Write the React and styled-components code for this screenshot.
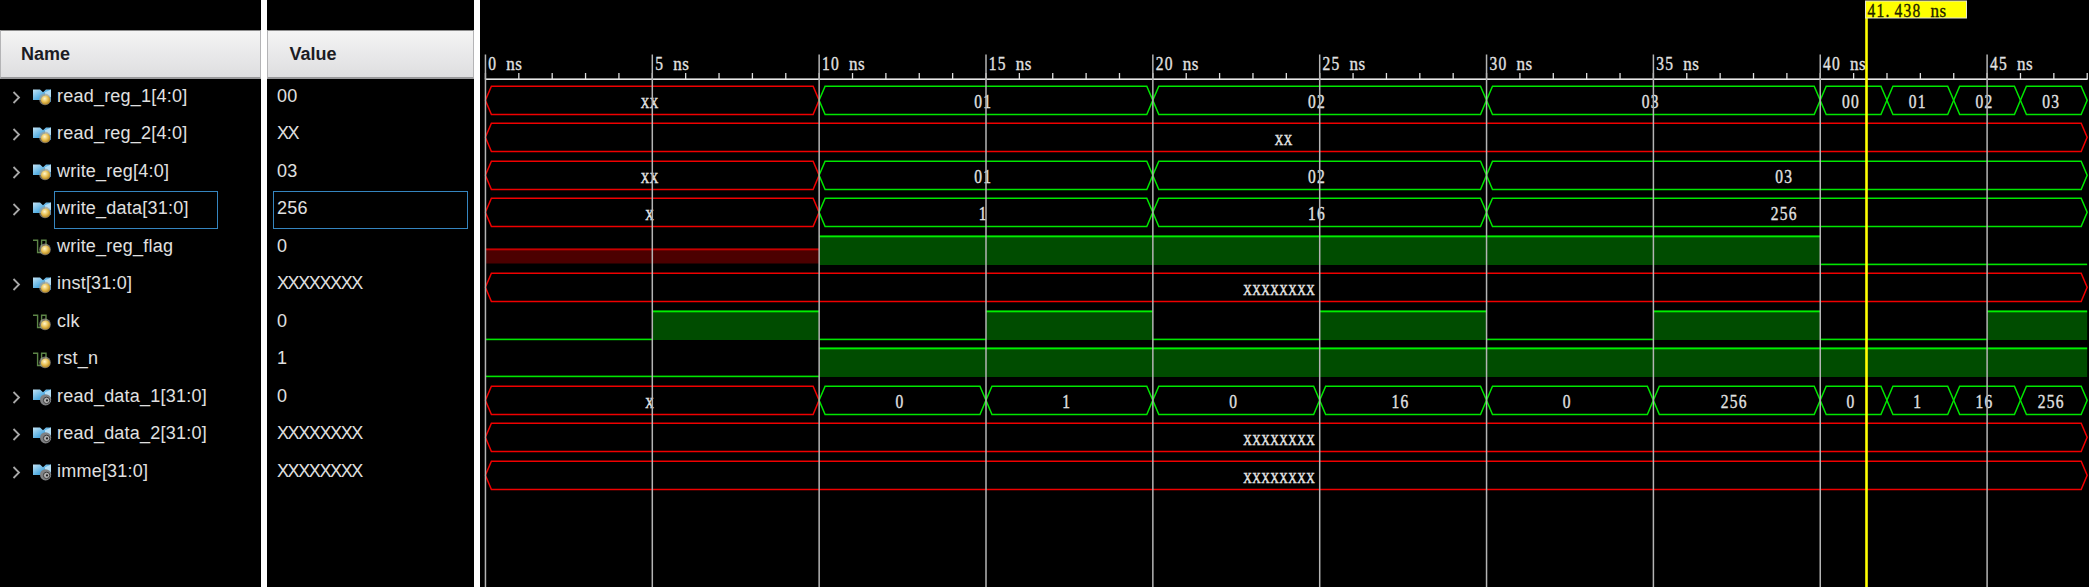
import React from 'react';
import styled, { createGlobalStyle } from 'styled-components';

const Global = createGlobalStyle`
  body { margin: 0; background: #000; overflow: hidden; }
`;
const ROW = 37.5;
const X0 = 5.4;
const NS = 33.37;
const px = (t) => X0 + t * NS;
const RED = '#f00000';
const GREEN = '#00e600';

const Viewer = styled.main`
  display: grid;
  grid-template-columns: 261px 6px 207px 6px 1fr;
  width: 2089px;
  height: 587px;
  background: #000;
  font-family: 'Liberation Sans', Arial, sans-serif;
  font-size: 18px;
  color: #e0e0e0;
`;
const Column = styled.section`
  display: flex;
  flex-direction: column;
  padding-top: 30px;
  min-width: 0;
`;
const Splitter = styled.div`
  background: #fff;
`;
const Header = styled.div`
  box-sizing: border-box;
  height: 48.5px;
  padding: 2px 0 0 ${(p) => p.$indent}px;
  display: flex;
  align-items: center;
  flex: none;
  font-weight: bold;
  color: #1c1c24;
  background: linear-gradient(#f4f4f4, #dedee0);
  border: 1px solid #b4b4b6;
  border-top-color: #8c8c8c;
  border-bottom: 2px solid #98989a;
`;
const NameRow = styled.div`
  height: ${ROW}px;
  flex: none;
  display: flex;
  align-items: center;
  padding-left: 12px;
`;
const Arrow = styled.svg`
  width: 9px;
  height: 13px;
  margin-right: 12px;
  visibility: ${(p) => (p.$hidden ? 'hidden' : 'visible')};
`;
const Icon = styled.svg`
  width: 20px;
  height: 18px;
  margin-right: 1px;
  position: relative;
  top: 1px;
`;
const Name = styled.span`
  box-sizing: border-box;
  height: 37.5px;
  line-height: 33.5px;
  width: 163.5px;
  padding-left: 2px;
  letter-spacing: 0.22px;
  white-space: nowrap;
  border: 1.5px solid ${(p) => (p.$active ? '#3585bf' : 'transparent')};
`;
const Value = styled.div`
  box-sizing: border-box;
  height: ${ROW}px;
  flex: none;
  line-height: 33.5px;
  margin: 0 6px;
  padding-left: 3px;
  letter-spacing: ${(p) => (p.$unknown ? '-1.4px' : '0.2px')};
  border: 1.5px solid ${(p) => (p.$active ? '#3585bf' : 'transparent')};
`;
const WavePane = styled.section`
  position: relative;
  display: flex;
  flex-direction: column;
  overflow: hidden;
`;
const Ruler = styled.svg`
  display: block;
  height: 78.5px;
  width: 1609px;
  flex: none;
`;
const Track = styled.svg`
  display: block;
  height: ${ROW}px;
  width: 1609px;
  flex: none;
  overflow: visible;
`;
const Overlay = styled.svg`
  position: absolute;
  inset: 0;
  width: 1609px;
  height: 587px;
`;
const Glyphs = styled.text`
  font-family: 'Liberation Serif', 'Times New Roman', serif;
  font-size: ${(p) => p.$size}px;
  fill: ${(p) => p.$color};
  stroke: ${(p) => p.$color};
  stroke-width: ${(p) => p.$weight}px;
`;

const CELL = 9;
const faces = {
  digit: { size: 18.5, scale: 0.84, weight: 0.35 },
  unit: { size: 18, scale: 0.95, weight: 0.3 },
  unknown: { size: 15.5, scale: 0.76, weight: 0.5 },
};

/* Text set on a fixed 9px character grid. */
function GridText({ x, y, face = 'digit', color = '#e2e2e2', children }) {
  const f = faces[face];
  const text = String(children);
  const xs = text.split('').map((_, i) => ((i * CELL) / f.scale).toFixed(2)).join(' ');
  return (
    <Glyphs $size={f.size} $weight={f.weight} $color={color} x={xs} y="0" transform={`translate(${x + 0.4} ${y}) scale(${f.scale} 1)`}>
      {text}
    </Glyphs>
  );
}

const U = 'XXXXXXXX';
const signals = [
  { name: 'read_reg_1[4:0]', value: '00', kind: 'in', bus: [[0, 10, 'XX'], [10, 20, '01'], [20, 30, '02'], [30, 40, '03'], [40, 42, '00'], [42, 44, '01'], [44, 46, '02'], [46, 48, '03']] },
  { name: 'read_reg_2[4:0]', value: 'XX', kind: 'in', bus: [[0, 48, 'XX']] },
  { name: 'write_reg[4:0]', value: '03', kind: 'in', bus: [[0, 10, 'XX'], [10, 20, '01'], [20, 30, '02'], [30, 48, '03']] },
  { name: 'write_data[31:0]', value: '256', kind: 'in', active: true, bus: [[0, 10, 'X'], [10, 20, '1'], [20, 30, '16'], [30, 48, '256']] },
  { name: 'write_reg_flag', value: '0', kind: 'bit', bits: [[0, 10, 'x'], [10, 40, 1], [40, 48, 0]] },
  { name: 'inst[31:0]', value: U, kind: 'in', bus: [[0, 48, U]] },
  { name: 'clk', value: '0', kind: 'bit', bits: [[0, 5, 0], [5, 10, 1], [10, 15, 0], [15, 20, 1], [20, 25, 0], [25, 30, 1], [30, 35, 0], [35, 40, 1], [40, 45, 0], [45, 48, 1]] },
  { name: 'rst_n', value: '1', kind: 'bit', bits: [[0, 10, 0], [10, 48, 1]] },
  { name: 'read_data_1[31:0]', value: '0', kind: 'out', bus: [[0, 10, 'X'], [10, 15, '0'], [15, 20, '1'], [20, 25, '0'], [25, 30, '16'], [30, 35, '0'], [35, 40, '256'], [40, 42, '0'], [42, 44, '1'], [44, 46, '16'], [46, 48, '256']] },
  { name: 'read_data_2[31:0]', value: U, kind: 'out', bus: [[0, 48, U]] },
  { name: 'imme[31:0]', value: U, kind: 'out', bus: [[0, 48, U]] },
];

function SignalIcon({ kind }) {
  return (
    <Icon viewBox="0 0 20 18">
      <defs>
        <linearGradient id="busBlue" x1="0" y1="0" x2="1" y2="1">
          <stop offset="0" stopColor="#c4e4f5" />
          <stop offset=".5" stopColor="#55aee2" />
          <stop offset="1" stopColor="#2b7dbd" />
        </linearGradient>
        <radialGradient id="gold" cx=".4" cy=".35" r=".7">
          <stop offset="0" stopColor="#fff6cc" />
          <stop offset=".55" stopColor="#e6bc4c" />
          <stop offset="1" stopColor="#a57a22" />
        </radialGradient>
      </defs>
      {kind === 'bit' ? (
        <path d="M0 1.2H4.6V13.5H8.6V1.2H13V8" fill="none" stroke="#5d8547" strokeWidth="1.4" />
      ) : (
        <>
          <path d="M0 0.5H7L10 3.2L13 0.5H18V13L12 12L8 11H0Z" fill="url(#busBlue)" />
          <path d="M12 3.2L18 0.5V8L12 7Z" fill="#b4def5" />
        </>
      )}
      {kind === 'out' ? (
        <g>
          <circle cx="12.6" cy="10.8" r="5.6" fill="#808284" />
          <circle cx="13.6" cy="11.4" r="3.2" fill="#b0b0b0" stroke="#3c3c3c" />
          <circle cx="14" cy="11.4" r="1.1" fill="#222" />
        </g>
      ) : (
        <g>
          <circle cx="12" cy="10.4" r="5.8" fill="#a5a196" opacity=".7" />
          <circle cx="12.6" cy="11" r="4.6" fill="url(#gold)" />
        </g>
      )}
    </Icon>
  );
}

function BusLabel({ a, b, text }) {
  const shift = text.length > 4 ? 7.5 : 3;
  const x = (px(a) + px(b)) / 2 - shift - (text.length * CELL) / 2;
  return <GridText x={x} y={29} face={text[0] === 'X' ? 'unknown' : 'digit'}>{text}</GridText>;
}

function BusTrack({ segments }) {
  return (
    <Track>
      {segments.map(([a, b, text]) => {
        const l = px(a);
        const r = px(b);
        return (
          <g key={a}>
            <path d={`M${l} 21.3L${l + 6} 7.3H${r - 6}L${r} 21.3L${r - 6} 35.5H${l + 6}Z`} fill="none" stroke={text[0] === 'X' ? RED : GREEN} strokeWidth="1.5" />
            <BusLabel a={a} b={b} text={text} />
          </g>
        );
      })}
    </Track>
  );
}

function BitTrack({ segments }) {
  return (
    <Track>
      {segments.map(([a, b, v]) => {
        const l = px(a);
        const w = px(b) - l;
        if (v === 0) return <rect key={a} x={l} y="34.6" width={w} height="1.6" fill={GREEN} />;
        const y = v === 1 ? 6.5 : 19.5;
        return (
          <g key={a}>
            <rect x={l} y={y} width={w} height={v === 1 ? 29.5 : 15} fill={v === 1 ? '#004c00' : '#4c0000'} />
            <rect x={l} y={y} width={w} height="1.8" fill={v === 1 ? '#00f000' : '#c80000'} />
          </g>
        );
      })}
    </Track>
  );
}

const majors = [0, 5, 10, 15, 20, 25, 30, 35, 40, 45];

export default function App() {
  const cursor = 1386.5;
  return (
    <>
      <Global />
      <Viewer>
        <Column>
          <Header $indent={20}>Name</Header>
          {signals.map((s) => (
            <NameRow key={s.name}>
              <Arrow $hidden={s.kind === 'bit'} viewBox="0 0 9 13">
                <path d="M1.5 1L7 6.5L1.5 12" fill="none" stroke="#a8a8a8" strokeWidth="1.8" />
              </Arrow>
              <SignalIcon kind={s.kind} />
              <Name $active={s.active}>{s.name}</Name>
            </NameRow>
          ))}
        </Column>
        <Splitter />
        <Column>
          <Header $indent={21.5}>Value</Header>
          {signals.map((s) => (
            <Value key={s.name} $active={s.active} $unknown={s.value[0] === 'X'}>{s.value}</Value>
          ))}
        </Column>
        <Splitter />
        <WavePane>
          <Ruler>
            {Array.from({ length: 49 }, (_, t) => (
              <rect key={t} x={px(t) - 0.6} y="73" width="1.3" height="6" fill="#ddd" />
            ))}
            {majors.map((t) => (
              <g key={t}>
                <GridText x={px(t) + 2.5} y={70}>{t}</GridText>
                <GridText x={px(t) + 2.5 + (String(t).length + 1) * CELL} y={70} face="unit">ns</GridText>
              </g>
            ))}
          </Ruler>
          {signals.map((s) => (s.bus ? <BusTrack key={s.name} segments={s.bus} /> : <BitTrack key={s.name} segments={s.bits} />))}
          <Overlay>
            <rect x={X0 - 0.5} y="78.4" width={48 * NS + 1} height="1.6" fill="#e8e8e8" />
            {majors.map((t) => (
              <rect key={t} x={px(t) - 0.7} y="54.5" width="1.5" height="533" fill="#b4b4b4" />
            ))}
            <rect x={cursor - 1.3} y="1" width="2.6" height="586" fill="#ff0" />
            <rect x={cursor - 1} y="1" width="101" height="17" fill="#ff0" stroke="#e6e6d0" />
            <GridText x={1387} y={17} color="#222200">41.438</GridText>
            <GridText x={1450} y={17} face="unit" color="#222200">ns</GridText>
          </Overlay>
        </WavePane>
      </Viewer>
    </>
  );
}
